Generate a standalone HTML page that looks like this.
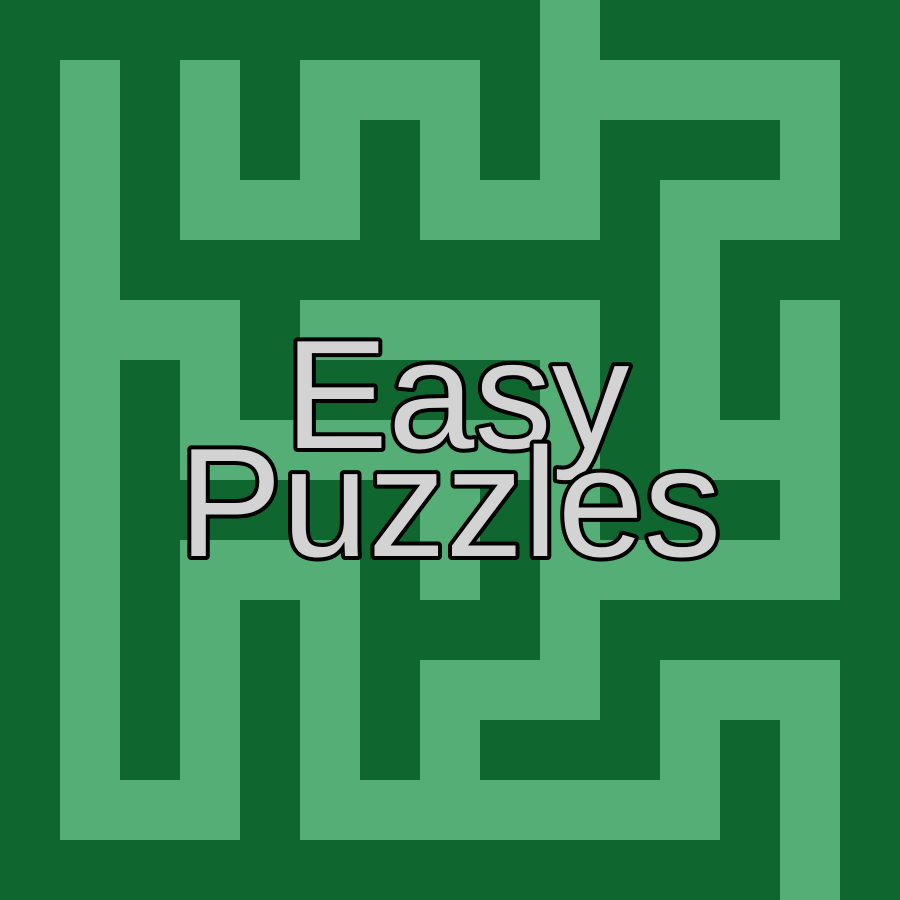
<!DOCTYPE html>
<html><head><style>html,body{margin:0;padding:0;background:#0f672f}svg{display:block}</style></head>
<body>
<svg width="900" height="900" viewBox="0 0 900 900" xmlns="http://www.w3.org/2000/svg">
<rect width="900" height="900" fill="#0f672f"/>
<g fill="#54ae75">
<rect x="540" y="0" width="60" height="60"/>
<rect x="60" y="60" width="60" height="60"/><rect x="180" y="60" width="60" height="60"/><rect x="300" y="60" width="180" height="60"/><rect x="540" y="60" width="300" height="60"/>
<rect x="60" y="120" width="60" height="60"/><rect x="180" y="120" width="60" height="60"/><rect x="300" y="120" width="60" height="60"/><rect x="420" y="120" width="60" height="60"/><rect x="540" y="120" width="60" height="60"/><rect x="780" y="120" width="60" height="60"/>
<rect x="60" y="180" width="60" height="60"/><rect x="180" y="180" width="180" height="60"/><rect x="420" y="180" width="180" height="60"/><rect x="660" y="180" width="180" height="60"/>
<rect x="60" y="240" width="60" height="60"/><rect x="660" y="240" width="60" height="60"/>
<rect x="60" y="300" width="180" height="60"/><rect x="300" y="300" width="300" height="60"/><rect x="660" y="300" width="60" height="60"/><rect x="780" y="300" width="60" height="60"/>
<rect x="60" y="360" width="60" height="60"/><rect x="180" y="360" width="60" height="60"/><rect x="540" y="360" width="60" height="60"/><rect x="660" y="360" width="60" height="60"/><rect x="780" y="360" width="60" height="60"/>
<rect x="60" y="420" width="60" height="60"/><rect x="180" y="420" width="420" height="60"/><rect x="660" y="420" width="180" height="60"/>
<rect x="60" y="480" width="60" height="60"/><rect x="420" y="480" width="60" height="60"/><rect x="540" y="480" width="60" height="60"/><rect x="780" y="480" width="60" height="60"/>
<rect x="60" y="540" width="60" height="60"/><rect x="180" y="540" width="180" height="60"/><rect x="420" y="540" width="60" height="60"/><rect x="540" y="540" width="300" height="60"/>
<rect x="60" y="600" width="60" height="60"/><rect x="180" y="600" width="60" height="60"/><rect x="300" y="600" width="60" height="60"/><rect x="540" y="600" width="60" height="60"/>
<rect x="60" y="660" width="60" height="60"/><rect x="180" y="660" width="60" height="60"/><rect x="300" y="660" width="60" height="60"/><rect x="420" y="660" width="180" height="60"/><rect x="660" y="660" width="180" height="60"/>
<rect x="60" y="720" width="60" height="60"/><rect x="180" y="720" width="60" height="60"/><rect x="300" y="720" width="60" height="60"/><rect x="420" y="720" width="60" height="60"/><rect x="660" y="720" width="60" height="60"/><rect x="780" y="720" width="60" height="60"/>
<rect x="60" y="780" width="180" height="60"/><rect x="300" y="780" width="420" height="60"/><rect x="780" y="780" width="60" height="60"/>
<rect x="780" y="840" width="60" height="60"/>
</g>
<g font-family="Liberation Sans, Arial, sans-serif" font-size="155" fill="#d3d3d3" stroke="#000" stroke-width="8" stroke-linejoin="round" paint-order="stroke" text-anchor="middle">
<text x="457" y="448">Easy</text>
<text x="450" y="556">Puzzles</text>
</g>
</svg>
</body></html>
